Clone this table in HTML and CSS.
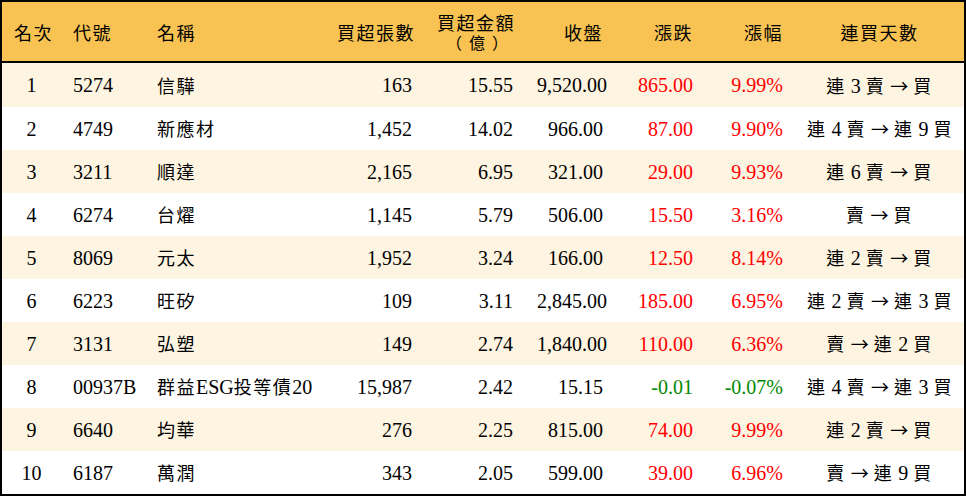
FILE: index.html
```html
<!DOCTYPE html>
<html lang="zh-Hant">
<head>
<meta charset="utf-8">
<title>買超排行</title>
<link rel="stylesheet" href="styles.css">
</head>
<body>
<div class="board">
<table class="rank">
<colgroup>
<col class="c-rank"><col class="c-code"><col class="c-name"><col class="c-vol"><col class="c-amt"><col class="c-close"><col class="c-chg"><col class="c-pct"><col class="c-days">
</colgroup>
<thead>
<tr>
<th class="ctr">名次</th>
<th class="lft">代號</th>
<th class="lft name-h">名稱</th>
<th class="rgt">買超張數</th>
<th class="rgt two"><span class="ln">買超金額</span><span class="ln unit">（億）</span></th>
<th class="rgt">收盤</th>
<th class="rgt">漲跌</th>
<th class="rgt">漲幅</th>
<th class="ctr">連買天數</th>
</tr>
</thead>
<tbody>
<tr class="odd first"><td class="ctr">1</td><td class="lft">5274</td><td class="lft"><span class="zh">信驊</span></td><td class="rgt">163</td><td class="rgt">15.55</td><td class="rgt">9,520.00</td><td class="rgt up">865.00</td><td class="rgt up">9.99%</td><td class="ctr"><span class="zh">連</span> 3 <span class="zh">賣</span> <span class="ar">→</span> <span class="zh">買</span></td></tr>
<tr><td class="ctr">2</td><td class="lft">4749</td><td class="lft"><span class="zh">新應材</span></td><td class="rgt">1,452</td><td class="rgt">14.02</td><td class="rgt">966.00</td><td class="rgt up">87.00</td><td class="rgt up">9.90%</td><td class="ctr"><span class="zh">連</span> 4 <span class="zh">賣</span> <span class="ar">→</span> <span class="zh">連</span> 9 <span class="zh">買</span></td></tr>
<tr class="odd"><td class="ctr">3</td><td class="lft">3211</td><td class="lft"><span class="zh">順達</span></td><td class="rgt">2,165</td><td class="rgt">6.95</td><td class="rgt">321.00</td><td class="rgt up">29.00</td><td class="rgt up">9.93%</td><td class="ctr"><span class="zh">連</span> 6 <span class="zh">賣</span> <span class="ar">→</span> <span class="zh">買</span></td></tr>
<tr><td class="ctr">4</td><td class="lft">6274</td><td class="lft"><span class="zh">台燿</span></td><td class="rgt">1,145</td><td class="rgt">5.79</td><td class="rgt">506.00</td><td class="rgt up">15.50</td><td class="rgt up">3.16%</td><td class="ctr"><span class="zh">賣</span> <span class="ar">→</span> <span class="zh">買</span></td></tr>
<tr class="odd"><td class="ctr">5</td><td class="lft">8069</td><td class="lft"><span class="zh">元太</span></td><td class="rgt">1,952</td><td class="rgt">3.24</td><td class="rgt">166.00</td><td class="rgt up">12.50</td><td class="rgt up">8.14%</td><td class="ctr"><span class="zh">連</span> 2 <span class="zh">賣</span> <span class="ar">→</span> <span class="zh">買</span></td></tr>
<tr><td class="ctr">6</td><td class="lft">6223</td><td class="lft"><span class="zh">旺矽</span></td><td class="rgt">109</td><td class="rgt">3.11</td><td class="rgt">2,845.00</td><td class="rgt up">185.00</td><td class="rgt up">6.95%</td><td class="ctr"><span class="zh">連</span> 2 <span class="zh">賣</span> <span class="ar">→</span> <span class="zh">連</span> 3 <span class="zh">買</span></td></tr>
<tr class="odd"><td class="ctr">7</td><td class="lft">3131</td><td class="lft"><span class="zh">弘塑</span></td><td class="rgt">149</td><td class="rgt">2.74</td><td class="rgt">1,840.00</td><td class="rgt up">110.00</td><td class="rgt up">6.36%</td><td class="ctr"><span class="zh">賣</span> <span class="ar">→</span> <span class="zh">連</span> 2 <span class="zh">買</span></td></tr>
<tr><td class="ctr">8</td><td class="lft">00937B</td><td class="lft"><span class="zh">群益</span>ESG<span class="zh">投等債</span>20</td><td class="rgt">15,987</td><td class="rgt">2.42</td><td class="rgt">15.15</td><td class="rgt down">-0.01</td><td class="rgt down">-0.07%</td><td class="ctr"><span class="zh">連</span> 4 <span class="zh">賣</span> <span class="ar">→</span> <span class="zh">連</span> 3 <span class="zh">買</span></td></tr>
<tr class="odd"><td class="ctr">9</td><td class="lft">6640</td><td class="lft"><span class="zh">均華</span></td><td class="rgt">276</td><td class="rgt">2.25</td><td class="rgt">815.00</td><td class="rgt up">74.00</td><td class="rgt up">9.99%</td><td class="ctr"><span class="zh">連</span> 2 <span class="zh">賣</span> <span class="ar">→</span> <span class="zh">買</span></td></tr>
<tr><td class="ctr">10</td><td class="lft">6187</td><td class="lft"><span class="zh">萬潤</span></td><td class="rgt">343</td><td class="rgt">2.05</td><td class="rgt">599.00</td><td class="rgt up">39.00</td><td class="rgt up">6.96%</td><td class="ctr"><span class="zh">賣</span> <span class="ar">→</span> <span class="zh">連</span> 9 <span class="zh">買</span></td></tr>
</tbody>
</table>
</div>
</body>
</html>
```
FILE: styles.css
```css
html, body {
  margin: 0;
  padding: 0;
  background: #ffffff;
}

.board {
  width: 966px;
  box-sizing: border-box;
  border: 2px solid #000000;
  background: #ffffff;
}

.rank {
  width: 100%;
  border-collapse: collapse;
  table-layout: fixed;
  font-family: "Liberation Serif", "Noto Sans CJK TC", serif;
  font-size: 20px;
  color: #000000;
}

.c-rank { width: 59px; }
.c-code { width: 84px; }
.c-name { width: 180px; }
.c-vol { width: 99px; }
.c-amt { width: 101px; }
.c-close { width: 90px; }
.c-chg { width: 90px; }
.c-pct { width: 90px; }
.c-days { width: 169px; }

.rank th,
.rank td {
  padding: 0 12px;
  white-space: nowrap;
  vertical-align: middle;
}

.rank thead tr {
  background: #f8c352;
  border-bottom: 2px solid #000000;
}

.rank th {
  height: 59px;
  font-family: "Noto Sans CJK TC", sans-serif;
  font-weight: 400;
  font-size: 18px;
  letter-spacing: 1.5px;
  line-height: 20px;
}

.rank th.two {
  padding-right: 10px;
}

.ln {
  display: block;
  line-height: 20px;
}

.ln.unit {
  font-size: 16px;
  letter-spacing: 7px;
  margin-right: 0;
}

.rank td {
  height: 43px;
  line-height: 22px;
}

.rank tr.first td {
  height: 44px;
}

.rank tr.odd {
  background: #fdf4e1;
}

.zh {
  font-family: "Noto Sans CJK TC", sans-serif;
  font-size: 18px;
  letter-spacing: 1.5px;
}

.ar {
  font-family: "Noto Sans CJK TC", sans-serif;
  font-size: 18px;
}

.ctr { text-align: center; }
.lft { text-align: left; }
.rgt { text-align: right; }

.up { color: #ff0000; }
.down { color: #008a00; }
```
